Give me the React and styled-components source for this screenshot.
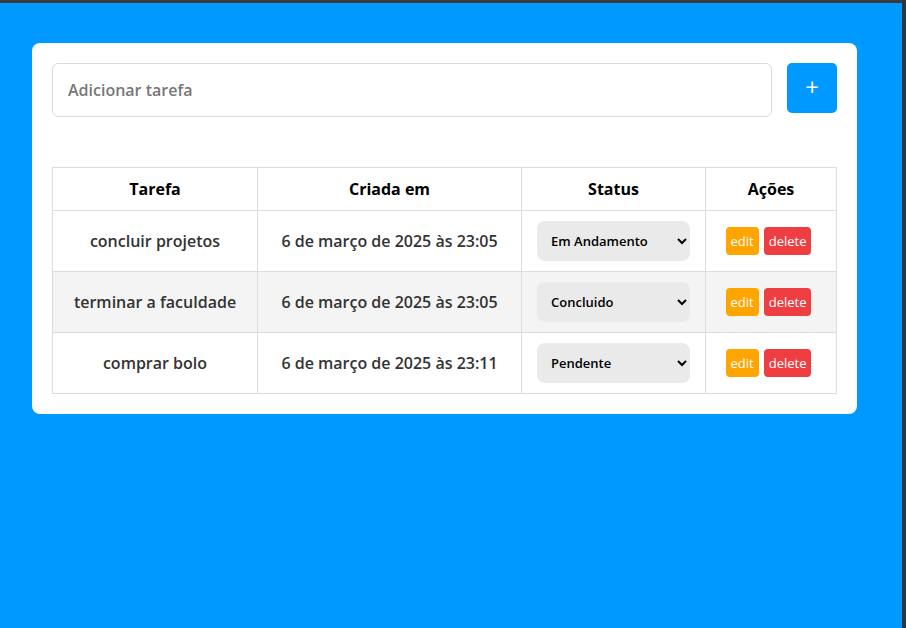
import React, { useState } from "react";
import styled, { createGlobalStyle } from "styled-components";

const GlobalStyle = createGlobalStyle`
  * {
    box-sizing: border-box;
  }
  body {
    margin: 0;
    background: #2b3540;
    font-family: "Open Sans", "Noto Sans", sans-serif;
  }
`;

const Page = styled.div`
  min-height: 628px;
  background: #0099ff;
  border-top: 3px solid #3a3a3a;
  margin-right: 4px;
  padding: 40px 45px 0 32px;
`;

const Card = styled.div`
  background: #fff;
  border-radius: 8px;
  padding: 20px;
`;

const Form = styled.form`
  display: flex;
  align-items: flex-start;
  gap: 15px;
  margin-bottom: 50px;
`;

const Input = styled.input`
  flex: 1;
  height: 54px;
  border: 1px solid #dcdcdc;
  border-radius: 6px;
  padding: 0 15px;
  font-family: inherit;
  font-size: 16px;
  font-weight: 600;
  color: #333;
  outline: none;

  &::placeholder {
    color: #777;
  }
`;

const AddButton = styled.button`
  width: 50px;
  height: 50px;
  border: none;
  border-radius: 5px;
  background: #0099ff;
  color: #fff;
  font-family: inherit;
  font-size: 24px;
  font-weight: 400;
  line-height: 1;
  padding: 0 0 3px;
  cursor: pointer;
`;

const Table = styled.table`
  width: 100%;
  border-collapse: collapse;
`;

const Th = styled.th`
  border: 1px solid #dddddd;
  height: 43px;
  font-size: 16px;
  font-weight: 700;
  color: #000;
  text-align: center;
  width: ${(p) => p.$w};
`;

const Row = styled.tr`
  background: ${(p) => (p.$striped ? "#f4f4f4" : "#fff")};
`;

const Td = styled.td`
  border: 1px solid #dddddd;
  height: 61px;
  padding: 0 15px;
  font-size: 16px;
  font-weight: 600;
  color: #333;
  text-align: center;
`;

const StatusSelect = styled.select`
  width: 153px;
  height: 40px;
  border: none;
  border-radius: 8px;
  background: #eaeaea;
  padding: 0 10px;
  font-family: inherit;
  font-size: 13px;
  font-weight: 600;
  color: #000;
`;

const Actions = styled.div`
  display: flex;
  justify-content: center;
`;

const ActionButton = styled.button`
  height: 28px;
  border: none;
  border-radius: 4px;
  margin-right: 5px;
  padding: 0 5px;
  background: ${(p) => (p.$danger ? "#ef3e42" : "#ffa500")};
  color: #fff;
  font-family: inherit;
  font-size: 13px;
  font-weight: 400;
  cursor: pointer;
`;

const initialTasks = [
  { id: 1, name: "concluir projetos", created: "6 de março de 2025 às 23:05", status: "Em Andamento" },
  { id: 2, name: "terminar a faculdade", created: "6 de março de 2025 às 23:05", status: "Concluido" },
  { id: 3, name: "comprar bolo", created: "6 de março de 2025 às 23:11", status: "Pendente" },
];

const App = () => {
  const [tasks, setTasks] = useState(initialTasks);

  const changeStatus = (id, status) =>
    setTasks((list) => list.map((t) => (t.id === id ? { ...t, status } : t)));

  return (
    <>
      <GlobalStyle />
      <Page>
        <Card>
          <Form onSubmit={(e) => e.preventDefault()}>
            <Input placeholder="Adicionar tarefa" />
            <AddButton type="submit">+</AddButton>
          </Form>
          <Table>
            <thead>
              <tr>
                <Th $w="205px">Tarefa</Th>
                <Th $w="264px">Criada em</Th>
                <Th $w="184px">Status</Th>
                <Th>Ações</Th>
              </tr>
            </thead>
            <tbody>
              {tasks.map((task, i) => (
                <Row key={task.id} $striped={i % 2 === 1}>
                  <Td>{task.name}</Td>
                  <Td>{task.created}</Td>
                  <Td>
                    <StatusSelect
                      value={task.status}
                      onChange={(e) => changeStatus(task.id, e.target.value)}
                    >
                      <option>Pendente</option>
                      <option>Em Andamento</option>
                      <option>Concluido</option>
                    </StatusSelect>
                  </Td>
                  <Td>
                    <Actions>
                      <ActionButton>edit</ActionButton>
                      <ActionButton $danger>delete</ActionButton>
                    </Actions>
                  </Td>
                </Row>
              ))}
            </tbody>
          </Table>
        </Card>
      </Page>
    </>
  );
};

export default App;
